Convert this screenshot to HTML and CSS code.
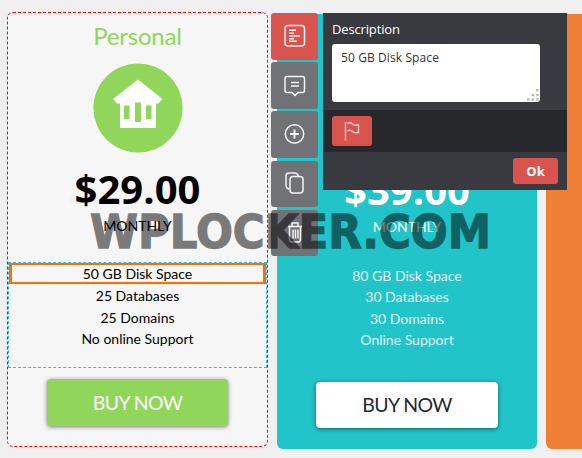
FILE: index.html
```html
<!DOCTYPE html>
<html lang="en">
<head>
<meta charset="utf-8">
<title>Pricing table editor</title>
<link rel="stylesheet" href="styles.css">
</head>
<body>
<main class="tables">
  <section class="card personal">
    <h2 class="title">Personal</h2>
    <svg class="logo" width="90" height="90" viewBox="0 0 90 90"><circle cx="45" cy="45" r="44.6" fill="#90d65a"/><path fill="#fff" d="M45 16.500 69.500 36 65.500 40.500H63V65H27V40.500H24L20 36Z"/><path fill="#90d65a" d="M31 42.500h5.500V56H31zM42 39.500h6V59h-6zM53 42.500h5.500V56H53z"/></svg>
    <div class="price">$29.00</div>
    <div class="period">MONTHLY</div>
    <ul class="features">
      <li class="selected">50 GB Disk Space</li>
      <li>25 Databases</li>
      <li>25 Domains</li>
      <li>No online Support</li>
    </ul>
    <a class="buy">BUY NOW</a>
  </section>
  <section class="card standard">
    <div class="price">$39.00</div>
    <div class="period">MONTHLY</div>
    <ul class="features">
      <li>80 GB Disk Space</li>
      <li>30 Databases</li>
      <li>30 Domains</li>
      <li>Online Support</li>
    </ul>
    <a class="buy">BUY NOW</a>
  </section>
  <section class="card extra"></section>
</main>
<nav class="toolbar">
  <button class="tool active"><svg width="24" height="24" viewBox="0 0 24 24"><rect x="2" y="1.500" width="19.500" height="20.500" rx="3"/><path d="M6 6.200h7M6 9.200h5M6 11.900h11M6 14.700h5M6 17.300h8"/></svg></button>
  <button class="tool"><svg width="24" height="24" viewBox="0 0 24 24"><path d="M4 2.500h15.500q2 0 2 2v12q0 2-2 2H15l-3 3-3-3H4q-2 0-2-2v-12q0-2 2-2ZM8 8.500h8M8 12h8"/></svg></button>
  <button class="tool"><svg width="24" height="24" viewBox="0 0 24 24"><circle cx="11.500" cy="11" r="9.200"/><path d="M11.500 6.500v9M7 11h9" stroke-width="2"/></svg></button>
  <button class="tool"><svg width="24" height="24" viewBox="0 0 24 24"><rect x="7" y="4.500" width="13" height="16.500" rx="3"/><path d="M7 17Q3 17 3 13V4q0-3 3-3h5.500q3 0 4 3"/></svg></button>
  <button class="tool"><svg width="24" height="24" viewBox="0 0 24 24"><path d="M5 5.500h14M9 5V2h6v3M6.500 6v11q0 4 2 4h7q2 0 2-4V6M10 8.500v9M12.500 8.500v9M15 8.500v9"/></svg></button>
</nav>
<aside class="popover">
  <div class="field">
    <label for="description">Description</label>
    <div class="input">
      <textarea id="description">50 GB Disk Space</textarea>
      <svg class="grip" width="12" height="12" viewBox="0 0 12 12"><path fill="#b9b9b9" d="M9 0h2.500v2.500H9zM4.700 4.700h2.500v2.500H4.700zM9.200 4.700h2.500v2.500H9.200zM0 9.200h2.500v2.500H0zM4.700 9.200h2.500v2.500H4.700zM9.200 9.200h2.500v2.500H9.200z"/></svg>
    </div>
  </div>
  <div class="options"><button class="flag"><svg width="18" height="22" viewBox="0 0 18 22"><path d="M2.500 2v18.500M4.500 3.500q3-1.500 5 .5t6 .5v8q-4 1-6-1t-5-.5"/></svg></button></div>
  <div class="actions"><button class="ok">Ok</button></div>
</aside>
<svg class="watermark" width="410" height="50"><text x="2" y="37.500" textLength="401" lengthAdjust="spacingAndGlyphs">WPLOCKER.COM</text></svg>
</body>
</html>
```
FILE: styles.css
```css
* { box-sizing: border-box; }
body {
  margin: 0;
  width: 582px;
  height: 458px;
  overflow: hidden;
  position: relative;
  background: #f0f0f0;
  font-family: Lato, sans-serif;
  font-size: 14px;
  color: #000;
}
.tables { display: flex; align-items: flex-start; padding: 12px 0 0 7px; }
.card {
  flex: none;
  display: flex;
  flex-direction: column;
  align-items: center;
  width: 261px;
  height: 435px;
  border-radius: 6px;
}
.personal { background: #f6f6f6; border: 1px dashed #f00; }
.title { margin: 7px 0 0; font-weight: 400; font-size: 24px; line-height: 32px; letter-spacing: -.2px; color: #90d65a; }
.logo { display: block; margin-top: 11px; }
.price { margin-top: 14px; font: 700 40px/44px "Open Sans", sans-serif; }
.period { margin-top: 5px; line-height: 20px; }
.features { width: 259px; margin: 0; padding: 0; list-style: none; text-align: center; }
.features li { height: 21.6px; line-height: 23px; }
.personal .features { height: 106px; margin-top: 26px; border: 1px dashed #29bdf2; }
.features .selected { height: 21px; line-height: 18px; border: 2px solid #ff6c00; border-left-width: 3px; border-right-width: 3px; }
.buy {
  width: 181px;
  height: 47px;
  border-radius: 4px;
  text-align: center;
  font-size: 19.5px;
  letter-spacing: -.6px;
  line-height: 48px;
  box-shadow: 0 1px 4px rgba(0, 0, 0, .5);
}
.personal .buy { margin-top: 11px; background: #90d65a; color: #fff; }
.standard { width: 260px; margin: 2px 0 0 9px; padding-top: 154px; background: #20c4c9; color: #fff; }
.standard .price { margin-top: 0; }
.standard .period { margin-top: 5px; }
.standard .features { margin-top: 28px; opacity: .88; }
.standard .features li { height: 21.3px; line-height: 21px; }
.standard .buy { width: 182px; height: 46px; margin-top: 32px; background: #fff; color: #222932; line-height: 46px; }
.extra { width: 36px; margin: 2px 0 0 9px; border-radius: 6px 0 0 6px; background: #ef7f34; }
.toolbar { position: absolute; left: 271px; top: 13px; display: grid; gap: 2.5px; }
.tool {
  display: flex;
  align-items: center;
  justify-content: center;
  width: 47px;
  height: 46.7px;
  padding: 0;
  border: 0;
  border-radius: 3px;
  background: #717276;
}
.tool.active { background: #d9534f; }
.tool svg, .flag svg { fill: none; stroke: #f4f4f4; stroke-width: 1.5; stroke-linejoin: round; }
.popover { position: absolute; left: 323px; top: 13px; width: 244px; background: #383a3f; font-family: "Open Sans", sans-serif; color: #fff; }
.field { height: 97px; padding: 7px 9px 0; font-size: 13px; }
.field label { display: block; height: 24px; line-height: 19px; letter-spacing: -.15px; }
.input { position: relative; width: 208px; height: 58px; }
textarea {
  display: block;
  width: 208px;
  height: 58px;
  padding: 5px 9px;
  border: 0;
  border-radius: 3px;
  background: #fff;
  color: #333;
  font: 12px/18px "Open Sans", sans-serif;
  letter-spacing: .1px;
  resize: none;
  overflow: hidden;
}
.grip { position: absolute; right: 1px; bottom: 1px; }
.options { height: 42px; padding: 6px 9px; background: #27282c; }
.flag { display: flex; align-items: center; justify-content: center; width: 40px; height: 30px; padding: 0; border: 0; border-radius: 3px; background: #d9534f; }
.flag svg { stroke-width: 1.5; stroke: #f5c6c4; }
.actions { display: flex; justify-content: flex-end; height: 38px; padding: 6px 9px; }
.ok { width: 45px; height: 26px; padding: 0; border: 0; border-radius: 3px; background: #d9534f; color: #fff; font: 700 13px/26px "Open Sans", sans-serif; }
.watermark { position: absolute; left: 88px; top: 210px; opacity: .5; }
.watermark text { font: 700 46.5px "DejaVu Sans", sans-serif; fill: #000; stroke: #000; stroke-width: 1.3px; }
```
